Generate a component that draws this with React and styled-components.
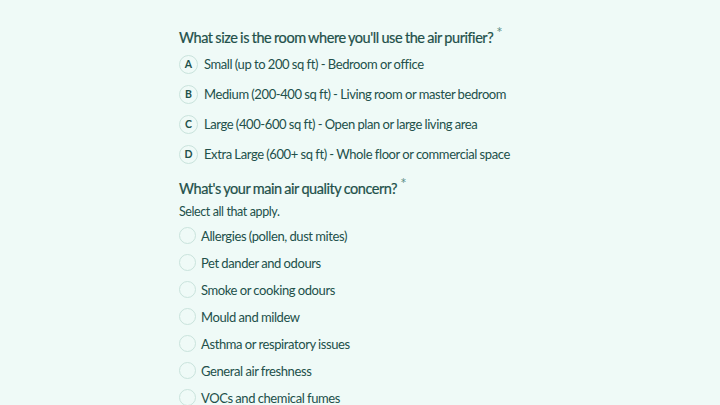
import React from "react";
import styled, { createGlobalStyle } from "styled-components";

const Global = createGlobalStyle`
    html, body {
        margin: 0;
        padding: 0;
        background: #effaf7;
    }
    body {
        font-family: Lato, "Noto Sans", sans-serif;
        color: #22504a;
    }
`;

const sizes = [
    { key: "A", label: "Small (up to 200 sq ft) - Bedroom or office" },
    { key: "B", label: "Medium (200-400 sq ft) - Living room or master bedroom" },
    { key: "C", label: "Large (400-600 sq ft) - Open plan or large living area" },
    { key: "D", label: "Extra Large (600+ sq ft) - Whole floor or commercial space" }
];

const concerns = [
    "Allergies (pollen, dust mites)",
    "Pet dander and odours",
    "Smoke or cooking odours",
    "Mould and mildew",
    "Asthma or respiratory issues",
    "General air freshness",
    "VOCs and chemical fumes"
];

function App() {
    return (
        <Page>
            <Global />
            <Form>
                <Question>
                    What size is the room where you'll use the air purifier?
                    <Star>*</Star>
                </Question>
                <Choices>
                    {sizes.map(s => (
                        <Choice key={s.key}>
                            <Badge>{s.key}</Badge>
                            <ChoiceText>{s.label}</ChoiceText>
                        </Choice>
                    ))}
                </Choices>

                <Question $second>
                    What's your main air quality concern?
                    <Star>*</Star>
                </Question>
                <Hint>Select all that apply.</Hint>
                <Checks>
                    {concerns.map(c => (
                        <Check key={c}>
                            <Ring />
                            <CheckText>{c}</CheckText>
                        </Check>
                    ))}
                </Checks>
            </Form>
        </Page>
    );
}

export default App;

const Page = styled.div`
    width: 720px;
    height: 405px;
    overflow: hidden;
`;

const Form = styled.div`
    padding: 28px 0 0 179px;
    display: flex;
    flex-direction: column;
`;

const Question = styled.h2`
    margin: ${p => (p.$second ? "15px" : "0")} 0 0 0;
    font-size: 14.5px;
    font-weight: 400;
    line-height: 20px;
    letter-spacing: -0.45px;
    word-spacing: -0.5px;
    -webkit-text-stroke: 0.2px #22504a;
`;

const Star = styled.span`
    position: relative;
    top: -5px;
    margin-left: 3px;
    font-size: 15px;
    line-height: 0;
    color: #5f918a;
    -webkit-text-stroke: 0;
`;

const Choices = styled.div`
    margin-top: 6px;
    display: flex;
    flex-direction: column;
    gap: 10px;
`;

const Choice = styled.div`
    display: flex;
    align-items: center;
    gap: 6px;
    height: 20px;
`;

const Badge = styled.span`
    box-sizing: border-box;
    width: 19px;
    height: 19px;
    border: 1px solid #c9e3dc;
    border-radius: 50%;
    display: flex;
    align-items: center;
    justify-content: center;
    font-size: 10.5px;
    font-weight: 700;
    color: #22504a;
`;

const ChoiceText = styled.span`
    font-size: 13px;
    letter-spacing: -0.4px;
    word-spacing: -0.3px;
`;

const Hint = styled.p`
    margin: 5px 0 0 0;
    font-size: 12.5px;
    line-height: 16px;
    letter-spacing: -0.4px;
`;

const Checks = styled.div`
    margin-top: 7px;
    display: flex;
    flex-direction: column;
    gap: 10px;
`;

const Check = styled.div`
    display: flex;
    align-items: center;
    gap: 5px;
    height: 17px;
`;

const Ring = styled.span`
    box-sizing: border-box;
    width: 17px;
    height: 17px;
    border: 1px solid #c9e3dc;
    border-radius: 50%;
`;

const CheckText = styled.span`
    font-size: 13px;
    letter-spacing: -0.4px;
    word-spacing: -0.3px;
`;
